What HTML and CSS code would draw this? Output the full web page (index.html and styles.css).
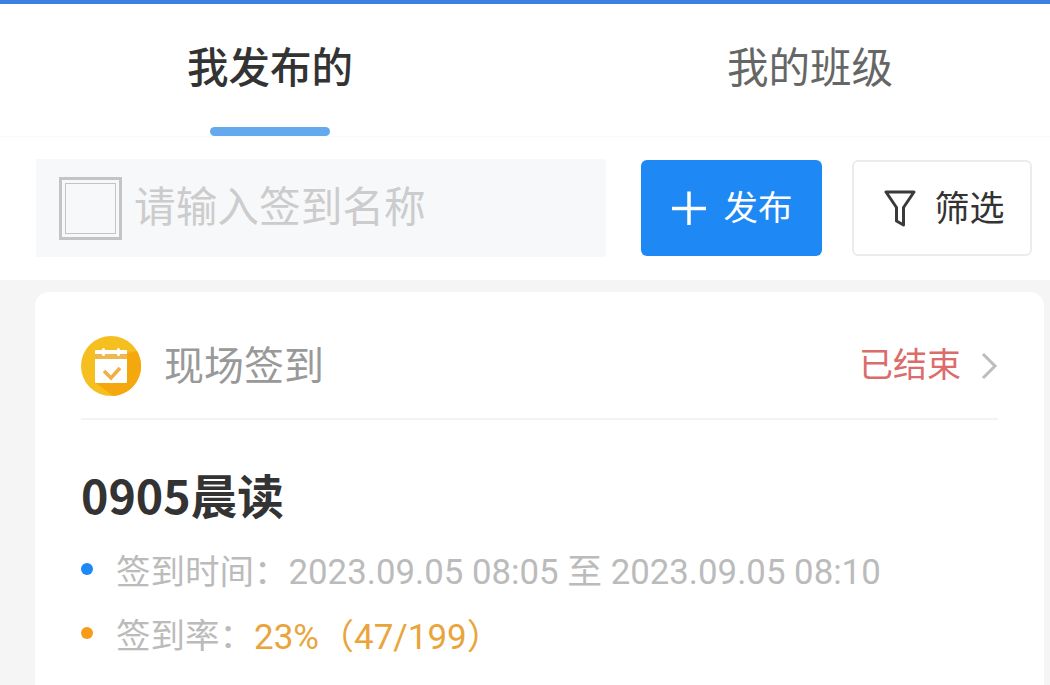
FILE: index.html
```html
<!DOCTYPE html>
<html lang="zh-CN">
<head>
    <meta charset="UTF-8">
    <meta name="viewport" content="width=device-width, initial-scale=1.0">
    <title>签到</title>
    <link rel="stylesheet" href="styles.css">
</head>
<body>

<div class="top-line"></div>

<div class="tabs">
    <div class="tab tab-active">我发布的<span class="tab-bar"></span></div>
    <div class="tab">我的班级</div>
</div>

<div class="toolbar">
    <div class="search">
        <span class="broken-img"><span class="broken-img-inner"></span></span>
        <span class="search-text">请输入签到名称</span>
    </div>
    <button class="btn btn-publish">
        <svg width="36" height="36" viewBox="0 0 36 36">
            <path d="M1 18.500H35M18 1.500V35" stroke="#fff" stroke-width="3.500" fill="none"/>
        </svg>
        <span class="btn-text">发布</span>
    </button>
    <button class="btn btn-filter">
        <svg width="32" height="38" viewBox="0 0 32 38">
            <path d="M2 3H30L19.500 18.500V36L12.500 32V18.500Z" stroke="#3a3a3a" stroke-width="3" stroke-linejoin="round" fill="none"/>
        </svg>
        <span class="btn-text">筛选</span>
    </button>
</div>

<div class="card">
    <div class="card-head">
        <svg width="60" height="60" viewBox="0 0 60 60">
            <circle cx="30" cy="30" r="30" fill="#f6bf20"/>
            <path d="M46 17L56 15A30 30 0 0 1 32 60L15 47Z" fill="#f4a80e"/>
            <rect x="14" y="14" width="32" height="33" rx="1" fill="#fff"/>
            <rect x="14" y="18" width="32" height="5" fill="#eeb84e"/>
            <rect x="21" y="12" width="3" height="8" rx="1.500" fill="#fff"/>
            <rect x="36" y="12" width="3" height="8" rx="1.500" fill="#fff"/>
            <path d="M23 35L30 42L39 32" stroke="#eeb040" stroke-width="3.500" fill="none"/>
        </svg>
        <span class="card-type">现场签到</span>
        <span class="card-status">已结束</span>
        <svg class="card-arrow" width="18" height="28" viewBox="0 0 18 28">
            <path d="M3 2L15 14L3 26" stroke="#bdbdbd" stroke-width="3" fill="none"/>
        </svg>
    </div>
    <h2 class="card-title">0905晨读</h2>
    <div class="info-row">
        <span class="dot dot-blue"></span>
        <span class="info-label">签到时间：</span>
        <span class="info-value">2023.09.05 08:05 至 2023.09.05 08:10</span>
    </div>
    <div class="info-row">
        <span class="dot dot-orange"></span>
        <span class="info-label">签到率：</span>
        <span class="info-rate">23%（47/199）</span>
    </div>
</div>

</body>
</html>
```

FILE: styles.css
```css
* {
    box-sizing: border-box;
}
html, body {
    height: 685px;
    overflow: hidden;
}
body {
    margin: 0;
    padding: 0;
    background-color: #f5f5f5;
    font-family: Roboto, "Noto Sans CJK SC", sans-serif;
}
.top-line {
    height: 4px;
    background-color: #3d7fe3;
}
.tabs {
    display: flex;
    height: 133px;
    overflow: hidden;
    background-color: #fff;
    border-bottom: 1px solid #f9f9f9;
}
.tab {
    position: relative;
    flex: none;
    width: 540px;
    padding-top: 35px;
    text-align: center;
    font-size: 41.500px;
    line-height: 60px;
    color: #666;
}
.tab-active {
    color: #333;
    font-weight: 500;
}
.tab-bar {
    position: absolute;
    left: 210px;
    bottom: 0;
    width: 120px;
    height: 9px;
    border-radius: 5px;
    background-color: #64a9ee;
}
.toolbar {
    display: flex;
    align-items: center;
    height: 143px;
    padding: 0 18px 1px 36px;
    background-color: #fff;
}
.search {
    display: flex;
    align-items: center;
    width: 570px;
    height: 98px;
    padding-left: 23px;
    background-color: #f7f8fa;
}
.broken-img {
    display: block;
    width: 63px;
    height: 63px;
    padding: 3px;
    border: 3px solid #c4c4c4;
}
.broken-img-inner {
    display: block;
    width: 100%;
    height: 100%;
    border: 1px solid #c4c4c4;
}
.search-text {
    margin-left: 12px;
    padding-bottom: 8px;
    font-size: 41.700px;
    color: #cccccc;
}
.btn {
    display: flex;
    align-items: center;
    justify-content: center;
    font-family: inherit;
    font-size: 34.500px;
    padding: 0;
}
.btn-text {
    padding-bottom: 6px;
}
.btn-publish {
    gap: 17px;
    width: 181px;
    height: 96px;
    margin-left: 35px;
    border: none;
    border-radius: 6px;
    background-color: #1e88f5;
    color: #fff;
}
.btn-filter {
    gap: 18px;
    width: 180px;
    height: 96px;
    margin-left: 30px;
    padding-left: 5px;
    border: 2px solid #ececec;
    border-radius: 6px;
    background-color: #fff;
    font-size: 35px;
    color: #333;
}
.card {
    width: 1009px;
    height: 420px;
    margin: 12px 0 0 35px;
    padding: 0 46px;
    border-radius: 14px;
    background-color: #fff;
}
.card-head {
    display: flex;
    align-items: center;
    height: 128px;
    padding-top: 22px;
    border-bottom: 2px solid #f3f3f3;
}
.card-type {
    margin-left: 23px;
    padding-bottom: 6px;
    font-size: 40px;
    color: #999;
}
.card-status {
    margin-left: auto;
    padding-bottom: 8px;
    font-size: 34px;
    color: #dc6b6b;
}
.card-arrow {
    margin-left: 19px;
}
.card-title {
    margin: 40px 0 9px;
    font-family: "Noto Sans CJK SC", sans-serif;
    font-size: 46.500px;
    line-height: 68px;
    font-weight: 700;
    color: #333;
}
.info-row {
    display: flex;
    align-items: center;
    height: 64px;
    font-size: 34.500px;
}
.dot {
    width: 12px;
    height: 12px;
    margin-right: 23px;
    border-radius: 50%;
}
.dot-blue {
    background-color: #1e88f5;
}
.dot-orange {
    background-color: #f79c1a;
}
.info-label {
    color: #bbb;
}
.info-value {
    font-size: 34.800px;
    color: #bbb;
}
.info-rate {
    font-size: 35px;
    color: #e9a53c;
}
```
